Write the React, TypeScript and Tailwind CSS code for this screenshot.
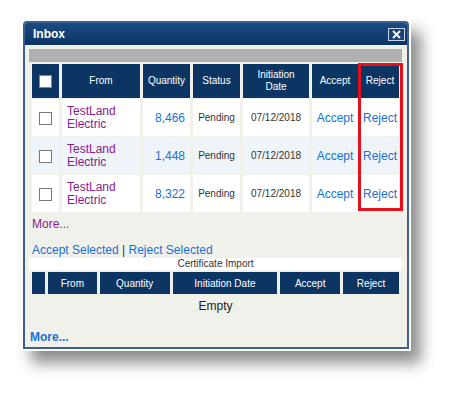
import React from "react";

const rows = [
  { qty: "8,466", alt: false },
  { qty: "1,448", alt: true },
  { qty: "8,322", alt: false },
];

function Box() {
  return <span className="inline-block h-[13px] w-[13px] border border-[#777] bg-white align-middle" />;
}

export default function App() {
  return (
    <div
      className="h-[396px] w-[453px] bg-white pl-[21px] pt-[19px]"
      style={{ fontFamily: '"Liberation Sans", Arial, sans-serif' }}
    >
      <div className="relative h-[332px] w-[390px] bg-white p-[2px] shadow-[10px_12px_14px_rgba(0,0,0,0.45)]">
        <div className="flex h-full w-full flex-col rounded-t-[4px] border-2 border-[#3a5f90] bg-[#f1f1ec]">
          {/* title bar */}
          <div className="flex h-[22px] items-center justify-between rounded-t-[2px] bg-gradient-to-b from-[#1d4c82] to-[#0a3465] pl-[8px] pr-[2px]">
            <span className="text-[12px] font-bold text-white">Inbox</span>
            <span className="flex h-[13px] w-[17px] items-center justify-center border border-[#c8d4e4] bg-[#1a4478]">
              <svg width="9" height="9" viewBox="0 0 9 9">
                <path d="M1 1L8 8M8 1L1 8" stroke="white" strokeWidth="1.8" />
              </svg>
            </span>
          </div>

          <div className="flex flex-1 flex-col pl-[4px] pr-[5px] pt-[4px]">
            <div className="h-[13px] bg-[#b0b0b0]" />

            {/* inbox table */}
            <table className="mt-[1px] border-separate border-spacing-x-[3px] border-spacing-y-px text-[#333]">
              <thead>
                <tr className="h-[34px] text-[10px] leading-[12px] text-white">
                  <th className="w-[27px] bg-[#0c3564] font-normal">
                    <span className="inline-block h-[13px] w-[13px] border border-[#888] bg-white align-middle" />
                  </th>
                  <th className="w-[78px] bg-[#0c3564] font-normal">From</th>
                  <th className="w-[47px] bg-[#0c3564] font-normal">Quantity</th>
                  <th className="w-[47px] bg-[#0c3564] font-normal">Status</th>
                  <th className="w-[66px] bg-[#0c3564] font-normal">
                    Initiation
                    <br />
                    Date
                  </th>
                  <th className="w-[46px] bg-[#0c3564] font-normal">Accept</th>
                  <th className="w-[38px] bg-[#0c3564] font-normal">Reject</th>
                </tr>
              </thead>
              <tbody>
                {rows.map((r, i) => (
                  <tr key={i} className={`h-[37px] ${r.alt ? "bg-[#eef4f8]" : "bg-white"}`}>
                    <td className="text-center">
                      <Box />
                    </td>
                    <td className="pl-[5px] text-[12px] leading-[13px] text-[#8b1a8b]">
                      TestLand
                      <br />
                      Electric
                    </td>
                    <td className="pr-[5px] text-right text-[12px] text-[#1a6fd4]">{r.qty}</td>
                    <td className="text-center text-[10px]">Pending</td>
                    <td className="text-center text-[10px]">07/12/2018</td>
                    <td className="text-center text-[12px] text-[#1a6fd4]">Accept</td>
                    <td className="text-center text-[12px] text-[#1a6fd4]">Reject</td>
                  </tr>
                ))}
              </tbody>
            </table>

            <div className="mt-[4px] pl-[3px] text-[12px] leading-[14px] text-[#8b1a8b]">More...</div>
            <div className="mt-[12px] pl-[3px] text-[12px] leading-[14px] text-[#1a6fd4]">
              Accept Selected <span className="text-[#333]">|</span> Reject Selected
            </div>

            <div className="mt-[1px] h-[12px] bg-white text-center text-[10px] leading-[12px] text-[#333]">
              Certificate Import
            </div>

            {/* certificate import table */}
            <table className="border-separate border-spacing-x-[3px] border-spacing-y-[2px]">
              <thead>
                <tr className="h-[22px] text-[10px] text-white">
                  <th className="w-[13px] bg-[#0c3564] font-normal" />
                  <th className="w-[49px] bg-[#0c3564] font-normal">From</th>
                  <th className="w-[70px] bg-[#0c3564] font-normal">Quantity</th>
                  <th className="w-[105px] bg-[#0c3564] font-normal">Initiation Date</th>
                  <th className="w-[60px] bg-[#0c3564] font-normal">Accept</th>
                  <th className="w-[56px] bg-[#0c3564] font-normal">Reject</th>
                </tr>
              </thead>
            </table>
            <div className="mt-[3px] text-center text-[12px] leading-[14px] text-[#222]">Empty</div>

            <div className="mt-[17px] pl-[1px] text-[12px] font-bold leading-[14px] text-[#1a6fd4]">More...</div>
          </div>
        </div>

        {/* highlight around Reject column */}
        <div className="pointer-events-none absolute left-[337px] top-[44px] h-[148px] w-[45px] border-[3px] border-[#e8101c]" />
      </div>
    </div>
  );
}
